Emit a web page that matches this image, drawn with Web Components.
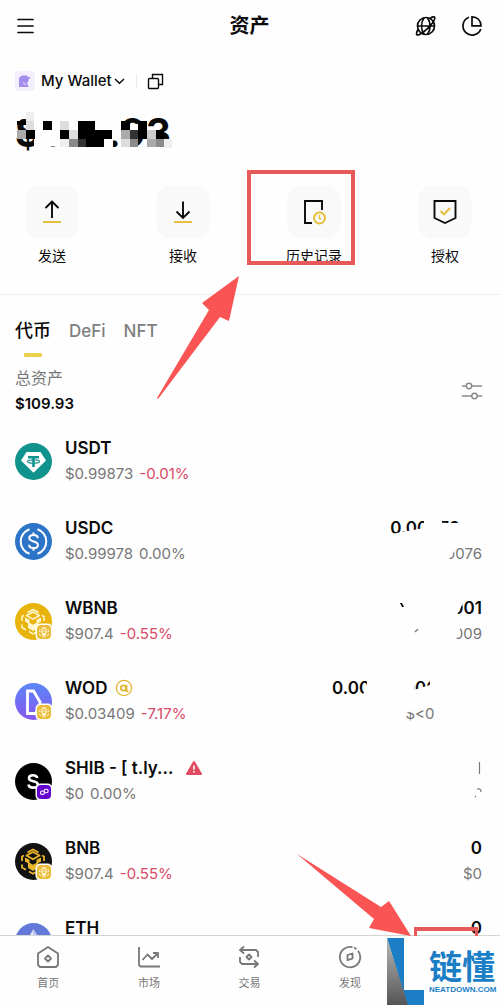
<!DOCTYPE html>
<html lang="zh-CN">
<head>
<meta charset="utf-8">
<meta name="viewport" content="width=device-width, initial-scale=1">
<title>资产</title>
<style>
html,body{margin:0;height:100%;background:#fefefe}
body{font-family:Inter,"Noto Sans CJK SC",sans-serif;color:#0a0a0a}
</style>
</head>
<body>
<wallet-app></wallet-app>
<script>
const define = (name, html) => customElements.define(name, class extends HTMLElement {
  connectedCallback() {
    if (this.shadowRoot) return;
    const t = document.createElement('template');
    t.innerHTML = typeof html === 'function' ? html(this) : html;
    this.attachShadow({mode: 'open'}).append(t.content.cloneNode(true));
  }
});

const button = 'button{font:inherit;color:inherit;background:none;border:0;padding:0;margin:0;cursor:pointer;display:flex;align-items:center}';

/* isometric cube used by the BNB chain marks */
const cube = (c, w) => `<g fill="none" stroke="${c}" stroke-width="${w}" stroke-linejoin="round">
  <path d="M12.5 9.5 18 6.5l5.500 3M9 12.500l-2 1v4.500M27 12.500l2 1v4.500M7 21.500v3l4 2.300M29 21.500v3l-4 2.300M14 28.500l4 2.300 4-2.300"/>
  <path d="M11.500 12.500 18 9l6.500 3.500L18 16.200z"/></g>
  <path fill="${c}" d="m10 14.500 4.500 2.200v3l3.500 2 3.500-2v-3l4.500-2.200v4l-3 1.700v4.800L18 28l-5-3v-4.800l-3-1.700z"/>`;
const bnbBadge = `<rect x="20.500" y="20.500" width="17" height="17" rx="5" fill="#fff"/><rect x="22" y="22" width="14" height="14" rx="4" fill="#e9bd3a"/><g transform="translate(21.500 21.500) scale(.42)">${cube('#fff8dc', 2)}</g>`;

const coins = {
  usdt: `<circle cx="18.500" cy="18.500" r="18.500" fill="#11938d"/><path fill="#fff" d="M11.500 9h14l5.500 8.500-12.500 12.300L6 17.500z"/><g fill="none" stroke="#11938d"><path stroke-width="2.600" d="M13 14.300h11M18.500 14v10"/><ellipse cx="18.500" cy="18.500" rx="6" ry="1.700" stroke-width="1.200"/></g>`,
  usdc: `<circle cx="18.500" cy="18.500" r="18.500" fill="#2b74c7"/><g fill="none" stroke="#fff" stroke-width="2"><path d="M14.500 6.200a13 13 0 0 0 0 24.600M22.500 6.200a13 13 0 0 1 0 24.600"/><path stroke-width="2" d="M22.800 15.200c0-2-1.700-3.200-4.300-3.200s-4.200 1.200-4.200 3.100c0 4.400 8.600 2.300 8.600 6.800 0 2-1.700 3.200-4.400 3.200s-4.400-1.200-4.400-3.400M18.500 9.500V12M18.500 25v2.700"/></g>`,
  wbnb: `<circle cx="18.500" cy="18.500" r="18.500" fill="#e8b40c"/>${cube('#fff6cf', 1.5)}${bnbBadge}`,
  wod: `<defs><linearGradient id="g" x1="0" y1="0" x2="0" y2="1"><stop stop-color="#5b86f7"/><stop offset="1" stop-color="#8658ee"/></linearGradient></defs><circle cx="18.500" cy="18.500" r="18.500" fill="url(#g)"/><path fill="none" stroke="#fff" stroke-width="2.800" d="M12.500 8v22.500h7.500l5-4.500V19l-6.500-11z"/>${bnbBadge}`,
  shib: `<circle cx="18.500" cy="18.500" r="18.500" fill="#000"/><path fill="none" stroke="#fff" stroke-width="2.600" d="M22.300 15c-.4-1.800-2-2.700-4.300-2.700s-4 1-4 2.900c0 4.200 8.800 1.800 8.800 6.200 0 2-1.900 3.200-4.600 3.200s-4.500-1.200-4.700-3.100"/><rect x="20.500" y="20.500" width="17" height="17" rx="5" fill="#fff"/><rect x="22" y="22" width="14" height="14" rx="4" fill="#6405cf"/><g fill="none" stroke="#fff" stroke-width="1.100"><rect x="25.500" y="28" width="3.800" height="3.400" rx="1.400"/><rect x="29.300" y="26.300" width="3.800" height="3.400" rx="1.400"/></g>`,
  bnb: `<circle cx="18.500" cy="18.500" r="18.500" fill="#121212"/>${cube('#ebb62b', 1.8)}${bnbBadge}`,
  eth: `<circle cx="18.500" cy="18.500" r="18.500" fill="#6379d9"/><path fill="#fff" fill-opacity=".8" d="M18.500 6 11 18.500l7.500 4.500z"/><path fill="#fff" fill-opacity=".6" d="m18.500 6 7.500 12.500-7.500 4.500zM11 20.500l7.500 10.500L26 20.500 18.500 25z"/>`
};

define('coin-icon', el => `<style>:host{display:block;width:37px;height:37px}svg{display:block;width:100%;height:100%}</style>
<svg viewBox="0 0 37 37" aria-hidden="true">${coins[el.getAttribute('name')] || ''}</svg>`);

define('app-header', `<style>${button}
:host{display:grid;grid-template-columns:1fr auto 1fr;align-items:center;height:52px;padding:0 17px 0 16px}
h1{margin:0;font-size:20px;line-height:28px;font-weight:700}
.r{display:flex;justify-content:flex-end;gap:24px}
svg{display:block;fill:none;stroke:#0a0a0a;stroke-width:1.7}
</style>
<button aria-label="菜单"><svg width="20" height="20"><path d="M2 3.500h15M2 10h15M2 16.500h15" stroke-linecap="round"/></svg></button>
<h1>资产</h1>
<div class="r">
<button aria-label="网络"><svg width="22" height="22"><circle cx="11" cy="11" r="8.500"/><path d="M2.500 11h17M9 2.800c-3.200 5-3.200 11.500 0 16.400M12.500 2.800c3.500 5 3.500 11.500 0 16.400M3 14.500c-3.500 6.500-.5 7 5.500 2.500 3.500-2.700 6.500-6 9-9 4-6 2.500-8-2.500-4.500"/></svg></button>
<button aria-label="统计"><svg width="22" height="22"><path d="M8 2.200A9.200 9.200 0 1 0 19.800 14M11 1.800v9h9c0-5.500-3.800-9-9-9z"/></svg></button>
</div>`);

define('wallet-switch', `<style>${button}
:host{display:flex;align-items:center;height:24px;padding:0 15px;font-size:15px;line-height:24px;font-weight:500}
.n{gap:2px}svg{display:block}
.n svg:first-child{margin-right:4px}
i{width:1px;height:14px;background:#ebebeb;margin:0 10px 0 11px}
</style>
<button class="n"><svg width="20" height="20"><rect width="20" height="20" rx="4" fill="#f3effe"/><path fill="#a48cec" d="M4 16V8.500C4 5.500 6 4.500 9 4.500h3l1 1.500 3 .5-2.500 2c.4 1.800-.5 2.500-1.500 3l1.500 4.500z"/><path stroke="#f3effe" d="m8 11.500 3 2.500"/></svg><span>My Wallet</span><svg width="11" height="8" fill="none" stroke="#0a0a0a" stroke-width="1.400"><path d="m1 2 4.500 4.300L10 2"/></svg></button><i></i>
<button aria-label="复制地址"><svg width="17" height="17" fill="none" stroke="#0a0a0a" stroke-width="1.400"><rect x="1.500" y="5.500" width="10" height="10" rx="1"/><path d="M5.500 5.500v-4h10v10h-4"/></svg></button>`);

/* balance under a pixelated privacy cover */
define('wallet-balance', `<style>
:host{display:block;position:relative;padding:0 15px;margin-top:16px;font-size:39px;line-height:48px;font-weight:700}
svg{position:absolute;left:17px;top:3px}
</style><span>$109.93</span>
<svg width="156" height="36" aria-hidden="true" shape-rendering="crispEdges">
<path fill="#fefefe" d="M0 0h9v7H0zM9 0h87v36H17V18H9zM113 14h9v4h-9z"/>
<path fill="#eee" d="M9 0h8v9H9zM147 27h8v9h-8zM43 27h9v8h-9z"/>
<path fill="#ddd" d="M9 9h8v9H9zM43 9h9v9h-9zM52 18h9v9h-9zM104 27h9v8h-9z"/>
<path fill="#aaa" d="M0 18h9v9H0zM104 18h9v9h-9zM130 27h9v8h-9z"/>
<path fill="#8a8a8a" d="M52 27h9v8h-9zM113 27h8v8h-8zM139 27h8v8h-8zM34 34h4v1h-4z"/>
<path fill="#000" d="M0 9h9v4H0zM9 18h9v9H9zM26 9h9v9h-9zM43 18h9v9h-9zM61 9h17v9H61zM61 18h34v9H61zM69 27h18v8H69zM104 9h9v9h-9zM121 9h9v18h-9zM139 18h8v9h-8z"/>
<path fill="#333" d="M61 27h8v8h-8zM113 18h8v9h-8z"/>
<path fill="#fefefe" d="M113 12h8v6h-8z"/>
<path fill="#ccc" d="M130 18h9v9h-9z"/></svg>`);

define('quick-action', `<style>${button}
:host{display:block}
button{flex-direction:column;width:54px;gap:7px;font-size:14px;line-height:20px;white-space:nowrap}
span{display:grid;place-items:center;width:54px;height:54px;border-radius:16px;background:#f9f9f9}
::slotted(svg){display:block}
</style><button><span><slot name="icon"></slot></span><slot></slot></button>`);

define('quick-actions', `<style>
:host{display:flex;justify-content:space-between;padding:28px 28px 28px 25px;border-bottom:1px solid #eee}
svg{width:28px;height:28px;fill:none;stroke:#0a0a0a;stroke-width:1.900}
.y{stroke:#e5bd38}
</style>
<quick-action><svg slot="icon"><path d="M14 20V4M7.500 10 14 3.500l6.500 6.500"/><path class="y" d="M5 24h18"/></svg>发送</quick-action>
<quick-action><svg slot="icon"><path d="M14 3.500v16M7.500 13.500 14 20l6.500-6.500"/><path class="y" d="M5 24h18"/></svg>接收</quick-action>
<quick-action><svg slot="icon"><path d="M12 25H5V3h17v9"/><circle class="y" cx="19.500" cy="20" r="5.500"/><path class="y" stroke-width="1.500" d="M19.500 17v3.500l1.500 1"/></svg>历史记录</quick-action>
<quick-action><svg slot="icon"><path d="M3.500 3h21v17L14 25 3.500 20z"/><path class="y" d="m9.500 13 3.500 3.500 6-6.500"/></svg>授权</quick-action>`);

define('asset-tabs', `<style>${button}
:host{display:flex;gap:18px;padding:20px 15px 0;font-size:17px;line-height:32px;font-weight:500;color:#808080}
button{flex-direction:column}
.on{font-size:18px;color:#0a0a0a}
.on::after{content:"";width:18px;height:4px;margin-top:6px;background:#ebd04e;border-radius:1px}
</style><button class="on">代币</button><button>DeFi</button><button>NFT</button>`);

define('asset-total', `<style>${button}
:host{display:flex;justify-content:space-between;align-items:center;padding:8px 18px 4px 15px}
div{display:grid;font-size:15px;line-height:26px}
span{font-size:16px;color:#777}b{font-weight:600}
svg{display:block;fill:#fefefe;stroke:#8a8a8a;stroke-width:1.500}
</style><div><span>总资产</span><b>$109.93</b></div>
<button aria-label="筛选"><svg width="20" height="18"><path d="M0 4h20M0 14h20"/><circle cx="7" cy="4" r="2.700"/><circle cx="12.500" cy="14" r="2.700"/></svg></button>`);

define('token-row', el => { const a = n => el.getAttribute(n) || ''; return `<style>
:host{display:grid;grid-template-columns:37px 1fr auto;column-gap:13px;align-items:center;height:80px;padding:0 18px 0 15px;position:relative;flex:none;box-sizing:border-box}
.t{display:flex;flex-direction:column;min-width:0}
.e{text-align:right}
h2,p{margin:0;display:flex;align-items:center;white-space:pre;height:26px}
h2{font-size:17px;line-height:26px;font-weight:600;gap:8px}
p{font-size:15px;line-height:26px;color:#777;gap:6px}
.e>*{justify-content:flex-end}
.down{color:#db4a65}
::slotted(svg.cover){position:absolute;right:0;top:0;width:200px;height:80px}
</style><coin-icon name="${a('coin')}"></coin-icon>
<div class="t"><h2>${a('name')}<slot name="mark"></slot></h2><p><span>${a('price')}</span><span class="${a('change')[0] === '-' ? 'down' : ''}">${a('change')}</span></p></div>
<div class="t e"><h2>${a('amount')}</h2><p>${a('value')}</p></div><slot></slot>`; });

define('token-list', `<style>
:host{display:flex;flex-direction:column;flex:1 1 0;min-height:0;overflow-y:auto;scrollbar-width:none}
.f{fill:#fefefe}
.s{fill:none;stroke:#777;stroke-width:1.200}
svg[slot]{display:block}
</style>
<token-row coin="usdt" name="USDT" price="$0.99873" change="-0.01%"></token-row>
<token-row coin="usdc" name="USDC" price="$0.99978" change="0.00%" amount="0.0007600" value="$0.00076">
<svg class="cover" viewBox="0 0 200 80"><path class="f" d="M80 35 124 27V10h18v12h42v18H80zM161 10h23v20h-23zM110 42h46v6l-7 10h6v6h-45z"/></svg></token-row>
<token-row coin="wbnb" name="WBNB" price="$907.4" change="-0.55%" amount="0.0000001" value="$0.00009">
<svg class="cover" viewBox="0 0 200 80"><path class="f" d="M86 12h77v10l-6 12H86zM100 40h60v8l-6 16h-54z"/><path d="m100 22 2 0 2 4-2 0z"/><path class="s" d="m115 51 3-3"/></svg></token-row>
<token-row coin="wod" name="WOD" price="$0.03409" change="-7.17%" amount="0.000000000080" value="$&lt;0.00001">
<svg slot="mark" width="18" height="18" fill="none" stroke="#e2b72f" stroke-width="1.300"><circle cx="9" cy="9" r="7.600"/><circle cx="8.500" cy="9" r="2.700" stroke-width="1.800"/><path stroke-width="1.800" d="M11.500 6v6.200h2"/></svg>
<svg class="cover" viewBox="0 0 200 80"><path class="f" d="M61 38l6-14V12h47v17l16-5V12h62v28H61zM134 40h60v24h-60zM100 40h14v10l-14 3z"/></svg></token-row>
<token-row coin="shib" name="SHIB - [ t.ly..." price="$0" change="0.00%">
<svg slot="mark" width="22" height="16"><path fill="#e04a60" stroke="#e04a60" stroke-linejoin="round" stroke-width="2" d="M13 2 6 14h14z"/><path stroke="#fff" stroke-width="1.600" d="M13 5.500v4.200M13 11v1.600"/></svg>
<svg class="cover" viewBox="0 0 200 80"><path class="s" d="M179.500 21v12M177 48q4-1 4 3M175 56l1-1"/></svg></token-row>
<token-row coin="bnb" name="BNB" price="$907.4" change="-0.55%" amount="0" value="$0"></token-row>
<token-row coin="eth" name="ETH" amount="0"></token-row>`);

define('nav-item', `<style>:host{display:block}
a{display:flex;flex-direction:column;align-items:center;gap:6px;color:#777;text-decoration:none;font-size:11px;line-height:16px}
::slotted(svg){display:block;width:24px;height:24px;fill:none;stroke:#777;stroke-width:1.800;stroke-linejoin:round}
</style><a href="#"><slot name="icon"></slot><slot></slot></a>`);

define('bottom-nav', `<style>
:host{display:grid;grid-template-columns:repeat(5,1fr);flex:none;border-top:1px solid #d4d4d4;padding-top:9px;margin:0 -1px 0 -2px;box-sizing:border-box;height:72px}
</style>
<nav-item><svg slot="icon"><path d="M12 2 22 8.500V20l-2 2H4l-2-2V8.500z"/><path d="m12 10.500 3 3-3 3-3-3z"/></svg>首页</nav-item>
<nav-item><svg slot="icon"><path d="M2 2v18l1.500 1.500H23M5.500 15l5-5.500 4.500 4.500 6-6M16 8h5v5"/></svg>市场</nav-item>
<nav-item><svg slot="icon"><path d="M7 1.500 3 5l4 3.500M3.500 5H19l2 2v5M17 15.500l4 3.500-4 3.500M20.500 19H5l-2-2v-5M12 9.500l2.500 2.500L12 14.500 9.500 12z"/></svg>交易</nav-item>
<nav-item><svg slot="icon"><path d="M14.500 2.200A10.200 10.200 0 1 0 20 5.700M16 2.500a10.500 10.500 0 0 1 2.500 1.600M9.500 10l5-1.500v5l-5 1.700z"/></svg>发现</nav-item>
<nav-item></nav-item>`);

/* tutorial marks: highlighted action and pointer arrows */
define('guide-marks', `<style>
:host{display:block;pointer-events:none}
svg{position:absolute;overflow:visible}
.a{top:168px;left:156px}.b{bottom:70px;right:15px}
</style>
<svg class="a" width="200" height="232"><rect x="93" y="4" width="104" height="91" fill="none" stroke="#e85a5a" stroke-width="4"/><path fill="#fa5454" d="M83 108 46 135 53 142 1 230 2 231 64 149 73 153z"/></svg>
<svg class="b" width="190" height="84"><path fill="#e85a5a" d="M119 74h64v9h-3v-5h-58v5h-3z"/><path fill="#fa5454" d="M2 1 86 54 94 48 116 83 74 75 79 66z"/></svg>`);

define('site-stamp', `<style>
:host{display:flex;position:absolute;right:0;bottom:0;width:113px;height:70px;background:#fefefe;gap:5px;color:#1c7fc6}
svg{flex:none}
div{display:flex;flex-direction:column;padding-top:12px}
b{font-size:33px;line-height:36px;font-weight:700}
small{font:700 8px/10px "Liberation Sans",sans-serif}
</style><svg width="37" height="70"><defs><linearGradient id="s" x1="0" y1="0" x2="0" y2="1"><stop stop-color="#b8b8b8"/><stop offset="1" stop-color="#555"/></linearGradient></defs><path fill="#1c7fc6" d="M0 1h17v52h20v15H20z"/><path fill="url(#s)" d="M0 1 21 68H0z"/></svg>
<div><b>链懂</b><small>NEATDOWN.COM</small></div>`);

define('wallet-app', `<style>
:host{display:flex;flex-direction:column;position:relative;height:100vh;min-height:600px;overflow:hidden}
wallet-switch{margin-top:17px}
</style>
<app-header></app-header>
<wallet-switch></wallet-switch>
<wallet-balance></wallet-balance>
<quick-actions></quick-actions>
<asset-tabs></asset-tabs>
<asset-total></asset-total>
<token-list></token-list>
<bottom-nav></bottom-nav>
<guide-marks></guide-marks>
<site-stamp></site-stamp>`);
</script>
</body>
</html>
